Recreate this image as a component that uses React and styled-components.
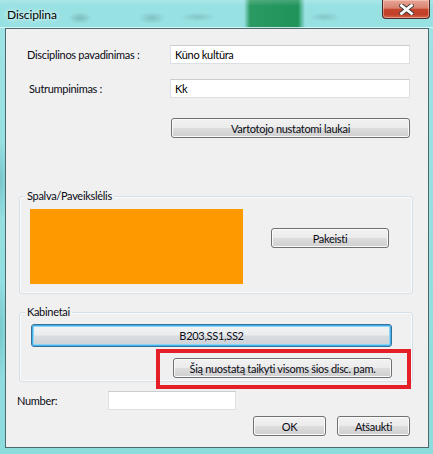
import React from 'react';
import styled, { createGlobalStyle, css } from 'styled-components';

const GlobalStyle = createGlobalStyle`
  html, body {
    margin: 0;
    padding: 0;
  }

  body {
    width: 433px;
    height: 454px;
    overflow: hidden;
    background: #97dfe1;
    font-family: Lato, 'Noto Sans', sans-serif;
    font-size: 11px;
    letter-spacing: -0.3px;
    color: #0a0a14;
  }
`;

const DialogWindow = styled.div`
  width: 433px;
  height: 454px;
  display: flex;
  flex-direction: column;
  background:
    radial-gradient(ellipse 10px 40px at 0px 180px, rgba(60, 150, 160, 0.35), transparent),
    radial-gradient(ellipse 8px 50px at 0px 330px, rgba(60, 150, 160, 0.3), transparent),
    linear-gradient(180deg, #9fe3e5 0%, #95dfe1 50%, #8cdbdd 100%);
`;

const TitleBar = styled.div`
  flex: none;
  height: 27px;
  display: flex;
  align-items: flex-start;
  justify-content: space-between;
  padding: 0 3px 0 7px;
  border-bottom: 1px solid rgba(225, 250, 250, 0.8);
  background:
    linear-gradient(180deg, rgba(255, 255, 255, 0.18) 0px, transparent 6px),
    linear-gradient(
      90deg,
      transparent 244px,
      #2a9a62 250px,
      #1f935a 298px,
      transparent 305px
    ),
    radial-gradient(ellipse 12px 6px at 80px 18px, rgba(70, 120, 120, 0.35), transparent),
    radial-gradient(ellipse 14px 6px at 152px 18px, rgba(70, 120, 120, 0.3), transparent),
    radial-gradient(ellipse 18px 5px at 198px 17px, rgba(70, 120, 120, 0.25), transparent),
    radial-gradient(ellipse 16px 5px at 325px 17px, rgba(70, 120, 120, 0.25), transparent),
    #98e1e3;
`;

const TitleText = styled.span`
  margin-top: 7px;
  font-size: 12px;
  line-height: 15px;
  letter-spacing: -0.1px;
  color: #000;
  text-shadow: 0 0 6px rgba(255, 255, 255, 0.9), 0 0 3px rgba(255, 255, 255, 0.8);
`;

const CloseButton = styled.div`
  box-sizing: border-box;
  width: 48px;
  height: 19px;
  display: flex;
  align-items: center;
  justify-content: center;
  border: 1px solid #4a2b28;
  border-top: none;
  border-radius: 0 0 4px 4px;
  background: linear-gradient(
    180deg,
    #e8a597 0%,
    #d9836f 45%,
    #c5452d 52%,
    #c23f27 80%,
    #d36a4e 100%
  );
  box-shadow: inset 0 0 0 1px rgba(255, 220, 210, 0.45);
`;

const ClientArea = styled.div`
  position: relative;
  flex: 1;
  margin: 0 4px 6px 5px;
  display: flex;
  flex-direction: column;
  border: 1px solid #4c696e;
  background: #f0f0f0;
`;

const FieldRow = styled.div`
  display: grid;
  grid-template-columns: ${({ $labelWidth }) => $labelWidth}px ${({ $inputWidth }) => $inputWidth}px;
  align-items: center;
  margin-top: ${({ $top }) => $top}px;
  padding-left: ${({ $left }) => $left}px;
`;

const FieldLabel = styled.label`
  padding-left: ${({ $indent }) => $indent || 0}px;
  white-space: nowrap;
`;

const TextBox = styled.input`
  box-sizing: border-box;
  height: 19px;
  width: 100%;
  margin: 0;
  padding: 0 0 0 4px;
  font: inherit;
  letter-spacing: inherit;
  color: #000;
  background: #fff;
  border: 1px solid #dcdfe3;
  border-top-color: #c9ccd1;
  outline: none;
`;

const ButtonRow = styled.div`
  display: flex;
  margin-top: ${({ $top }) => $top}px;
  padding-left: ${({ $left }) => $left || 0}px;
  padding-right: ${({ $right }) => $right || 0}px;
  justify-content: ${({ $align }) => $align || 'flex-start'};
  gap: ${({ $gap }) => $gap || 0}px;
`;

const PushButton = styled.button`
  box-sizing: border-box;
  flex: none;
  width: ${({ $w }) => ($w ? `${$w}px` : 'auto')};
  height: ${({ $h }) => $h || 20}px;
  margin: 0;
  margin-top: ${({ $top }) => $top || 0}px;
  padding: 0;
  font: inherit;
  letter-spacing: inherit;
  color: #0a0a14;
  border: 1px solid #707070;
  border-radius: 3px;
  background: linear-gradient(
    180deg,
    #f2f2f2 0%,
    #ebebeb 50%,
    #dddddd 50%,
    #cfcfcf 100%
  );
  box-shadow: inset 0 0 0 1px #fbfbfb;

  ${({ $focused }) =>
    $focused &&
    css`
      border-color: #3a6f99;
      background: linear-gradient(
        180deg,
        #f1f3f5 0%,
        #eaedef 48%,
        #d9dde1 52%,
        #cdd2d7 100%
      );
      box-shadow: inset 0 0 0 1px #3fb2ea, inset 0 0 0 2px #8fd3f3;
    `}
`;

const GroupBox = styled.div`
  display: flex;
  flex-direction: column;
  margin: ${({ $top }) => $top}px 15px 0 13px;
  border: 1px solid #d5dfe5;
  border-radius: 3px;
  box-shadow: inset 0 0 0 1px #fafcfd;
`;

const GroupTitle = styled.span`
  align-self: flex-start;
  margin: -9px 0 0 5px;
  padding: 0 2px;
  line-height: 15px;
  background: #f0f0f0;
`;

const ColorRow = styled.div`
  display: flex;
  align-items: flex-start;
  gap: 28px;
  padding: 6px 0 9px 10px;
`;

const ColorSwatch = styled.div`
  width: 213px;
  height: 75px;
  background: ${({ $color }) => $color};
`;

const RoomsBody = styled.div`
  display: flex;
  flex-direction: column;
  padding: 5px 20px 3px 11px;

  & > :last-child {
    align-self: flex-end;
    margin-top: 11px;
  }
`;

const Highlight = styled.div`
  position: absolute;
  left: 150px;
  top: 320px;
  width: 255px;
  height: 40px;
  box-sizing: border-box;
  border: 4px solid #e51f27;
  pointer-events: none;
`;

const CloseGlyph = () => (
  <svg width="15" height="11" viewBox="0 0 15 11">
    <path
      d="M2.5 1.5 L12.5 9.5 M12.5 1.5 L2.5 9.5"
      stroke="#3b3b3b"
      strokeWidth="4.6"
      strokeLinecap="square"
      fill="none"
    />
    <path
      d="M2.5 1.5 L12.5 9.5 M12.5 1.5 L2.5 9.5"
      stroke="#ffffff"
      strokeWidth="2.8"
      strokeLinecap="square"
      fill="none"
    />
  </svg>
);

const App = () => {
  return (
    <>
      <GlobalStyle />
      <DialogWindow>
        <TitleBar>
          <TitleText>Disciplina</TitleText>
          <CloseButton>
            <CloseGlyph />
          </CloseButton>
        </TitleBar>
        <ClientArea>
          <FieldRow $top={16} $left={21} $labelWidth={143} $inputWidth={240}>
            <FieldLabel>Disciplinos pavadinimas :</FieldLabel>
            <TextBox value='Kūno kultūra' readOnly />
          </FieldRow>
          <FieldRow $top={15} $left={21} $labelWidth={143} $inputWidth={240}>
            <FieldLabel $indent={2}>Sutrumpinimas :</FieldLabel>
            <TextBox value='Kk' readOnly />
          </FieldRow>
          <ButtonRow $top={20} $left={165}>
            <PushButton $w={239}>Vartotojo nustatomi laukai</PushButton>
          </ButtonRow>

          <GroupBox $top={58}>
            <GroupTitle>Spalva/Paveikslėlis</GroupTitle>
            <ColorRow>
              <ColorSwatch $color='#ff9900' />
              <PushButton $w={118} $top={19}>
                Pakeisti
              </PushButton>
            </ColorRow>
          </GroupBox>

          <GroupBox $top={18}>
            <GroupTitle>Kabinetai</GroupTitle>
            <RoomsBody>
              <PushButton $focused $h={23}>
                B203,SS1,SS2
              </PushButton>
              <PushButton $w={219}>
                Šią nuostatą taikyti visoms šios disc. pam.
              </PushButton>
            </RoomsBody>
          </GroupBox>

          <FieldRow $top={9} $left={11} $labelWidth={91} $inputWidth={128}>
            <FieldLabel>Number:</FieldLabel>
            <TextBox readOnly />
          </FieldRow>

          <ButtonRow $top={6} $right={18} $align='flex-end' $gap={11}>
            <PushButton $w={73}>OK</PushButton>
            <PushButton $w={73}>Atšaukti</PushButton>
          </ButtonRow>

          <Highlight />
        </ClientArea>
      </DialogWindow>
    </>
  );
};

export default App;
